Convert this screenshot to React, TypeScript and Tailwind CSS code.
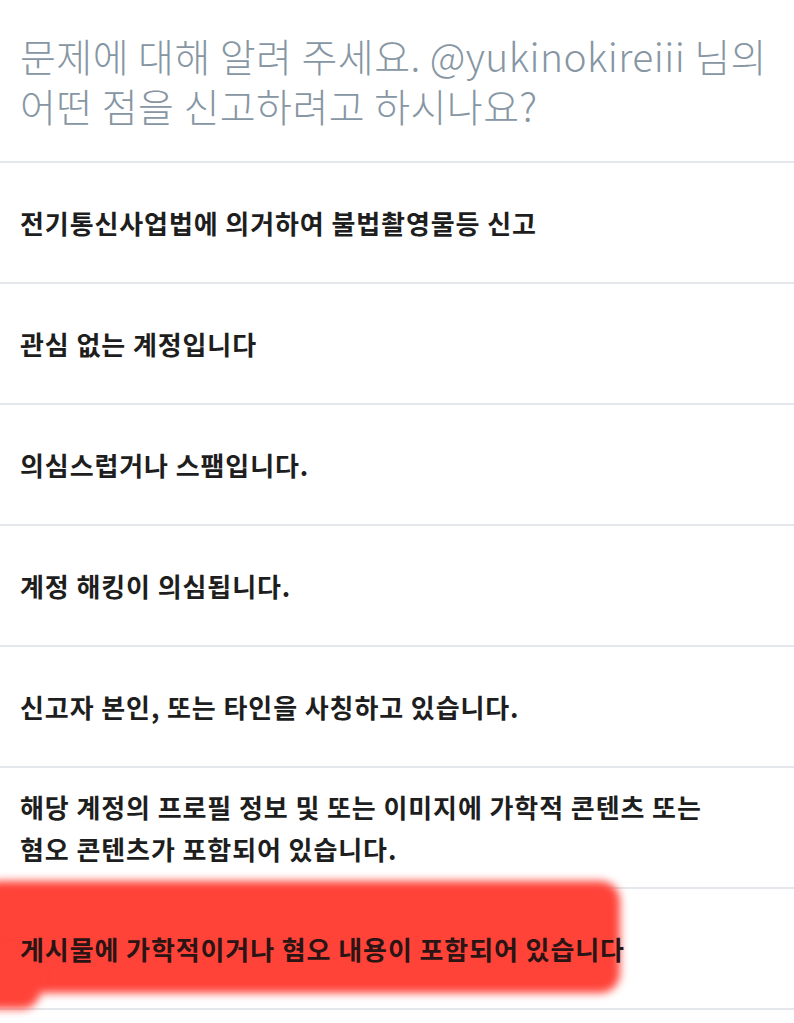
import React from "react";

const rows: string[][] = [
  ["전기통신사업법에 의거하여 불법촬영물등 신고"],
  ["관심 없는 계정입니다"],
  ["의심스럽거나 스팸입니다."],
  ["계정 해킹이 의심됩니다."],
  ["신고자 본인, 또는 타인을 사칭하고 있습니다."],
  ["해당 계정의 프로필 정보 및 또는 이미지에 가학적 콘텐츠 또는", "혐오 콘텐츠가 포함되어 있습니다."],
];

export default function App() {
  return (
    <div
      className="w-[794px] h-[1023px] bg-white overflow-hidden relative"
      style={{ fontFamily: '"Noto Sans CJK KR", "Noto Sans", sans-serif' }}
    >
      <div className="h-[163px] px-[20px] pt-[30px] text-[#8796a3] text-[39px] leading-[50px] font-light tracking-[0.45px] whitespace-nowrap border-b-2 border-[#e4e8ec]">
        <div>문제에 대해 알려 주세요. @yukinokireiii 님의</div>
        <div>어떤 점을 신고하려고 하시나요?</div>
      </div>
      {rows.map((lines, i) => (
        <div
          key={i}
          className="h-[121px] px-[20px] flex flex-col justify-center border-b-2 border-[#e4e8ec] text-[#1e1e1e] text-[26px] leading-[42px] font-bold tracking-[0.9px] whitespace-nowrap"
        >
          {lines.map((l, j) => (
            <div key={j}>{l}</div>
          ))}
        </div>
      ))}
      <div className="h-[121px] px-[20px] flex items-center border-b-2 border-[#e4e8ec] relative">
        <div className="absolute left-[-20px] top-[-8px] w-[640px] h-[112px] bg-[#ff4339] rounded-[20px] blur-[4px]" />
        <div className="absolute left-[-20px] top-[60px] w-[60px] h-[60px] bg-[#ff4339] rounded-[18px] blur-[4px]" />
        <div className="relative text-[#2a1414] text-[26px] font-bold tracking-[0.9px] whitespace-nowrap">
          게시물에 가학적이거나 혐오 내용이 포함되어 있습니다
        </div>
      </div>
    </div>
  );
}
